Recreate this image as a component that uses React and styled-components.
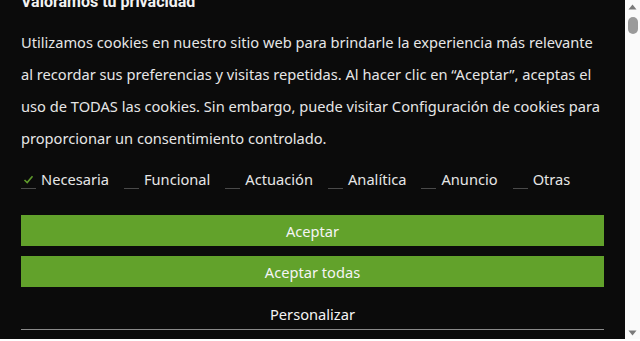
import { useEffect, useRef } from 'react';
import styled, { createGlobalStyle } from 'styled-components';

const GlobalStyle = createGlobalStyle`
    html, body {
        margin: 0;
        padding: 0;
        background: #ffffff;
    }
    * {
        box-sizing: border-box;
    }
`

const Frame = styled.div`
    display: flex;
    flex-direction: row;
    width: 640px;
    height: 339px;
`

const ScrollBox = styled.div`
    width: 625px;
    height: 100%;
    overflow: hidden;
`

const Panel = styled.div`
    background-color: #0b0b0b;
    color: #e4e4e4;
    font-family: "Noto Sans", "Open Sans", sans-serif;
    padding: 50px 21px 0 21px;
    min-height: 6180px;
`

const ScrollBar = styled.div`
    display: flex;
    flex-direction: column;
    align-items: center;
    width: 15px;
    height: 100%;
    background-color: #fafafa;
    padding: 4px 0 3px 0;
`

const Thumb = styled.div`
    width: 10px;
    height: 17px;
    margin-top: 7px;
    border-radius: 5px;
    background-color: #9a9a9a;
`

const Spacer = styled.div`
    flex: 1;
`

const Title = styled.h2`
    margin: 0;
    font-family: Roboto, "Noto Sans", sans-serif;
    font-weight: 700;
    font-size: 16px;
    line-height: 24px;
    color: #f2f2f2;
`

const Text = styled.p`
    margin: 12px 0 0 0;
    font-size: 14.65px;
    line-height: 32px;
    color: #e6e6e6;
`

const CheckRow = styled.div`
    display: flex;
    flex-direction: row;
    align-items: center;
    gap: 15px;
    margin-top: 15px;
    height: 20px;
`

const CheckItem = styled.label`
    display: flex;
    align-items: center;
    gap: 5px;
    font-size: 14.65px;
    line-height: 20px;
    color: #e6e6e6;
`

const Box = styled.span`
    position: relative;
    display: inline-block;
    width: 15px;
    height: 14px;
    border-bottom: 1px solid #4a4a4a;
    margin-top: 6px;
`

const Tick = styled.svg`
    position: absolute;
    left: 2px;
    top: -1px;
`

const Buttons = styled.div`
    display: flex;
    flex-direction: column;
    gap: 10px;
    margin-top: 26px;
`

const Button = styled.button`
    display: block;
    width: 100%;
    height: ${p => (p.$plain ? '33px' : '31px')};
    border: none;
    border-bottom: ${p => (p.$plain ? '1px solid #8a8a8a' : 'none')};
    background-color: ${p => (p.$plain ? 'transparent' : '#62a22b')};
    color: #f4f4f4;
    font-family: "Noto Sans", "Open Sans", sans-serif;
    font-size: 14.65px;
    padding: ${p => (p.$plain ? '2px 0 0 0' : '0')};
    cursor: pointer;
`

const categories = [
    { name: 'Necesaria', checked: true },
    { name: 'Funcional' },
    { name: 'Actuación' },
    { name: 'Analítica' },
    { name: 'Anuncio' },
    { name: 'Otras' },
]

function Check({ checked }) {
    return (
        <Box>
            {checked && (
                <Tick width="11" height="11" viewBox="0 0 11 11">
                    <path d="M1.5 6 L4.2 8.6 L9.5 2.2" fill="none" stroke="#5f9a2c" strokeWidth="1.6" />
                </Tick>
            )}
        </Box>
    )
}

function Arrow({ down }) {
    return (
        <svg width="9" height="6" viewBox="0 0 9 6">
            <path d={down ? 'M0.5 0.5 L8.5 0.5 L4.5 5.5 Z' : 'M0.5 5.5 L8.5 5.5 L4.5 0.5 Z'} fill="#7a7a7a" />
        </svg>
    )
}

export default function App() {
    const ref = useRef(null);

    useEffect(() => {
        if (ref.current) ref.current.scrollTop = 60;
    }, []);

    return (
        <>
            <GlobalStyle />
            <Frame>
                <ScrollBox ref={ref}>
                    <Panel>
                        <Title>Valoramos tu privacidad</Title>
                        <Text>
                            Utilizamos cookies en nuestro sitio web para brindarle la experiencia más relevante
                            al recordar sus preferencias y visitas repetidas. Al hacer clic en “Aceptar”, aceptas el
                            uso de TODAS las cookies. Sin embargo, puede visitar Configuración de cookies para
                            proporcionar un consentimiento controlado.
                        </Text>
                        <CheckRow>
                            {categories.map(c => (
                                <CheckItem key={c.name}>
                                    <Check checked={c.checked} />
                                    {c.name}
                                </CheckItem>
                            ))}
                        </CheckRow>
                        <Buttons>
                            <Button>Aceptar</Button>
                            <Button>Aceptar todas</Button>
                            <Button $plain>Personalizar</Button>
                        </Buttons>
                    </Panel>
                </ScrollBox>
                <ScrollBar>
                    <Arrow />
                    <Thumb />
                    <Spacer />
                    <Arrow down />
                </ScrollBar>
            </Frame>
        </>
    )
}
